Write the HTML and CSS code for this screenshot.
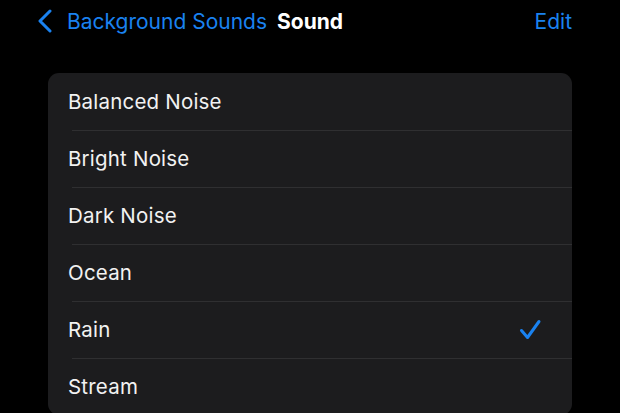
FILE: index.html
```html
<!DOCTYPE html>
<html lang="en">
<head>
  <meta charset="UTF-8" />
  <meta name="viewport" content="width=620, height=413, initial-scale=1.0" />
  <title>Sound</title>
  <link rel="stylesheet" href="styles.css">
</head>
<body>
  <nav class="navbar">
    <a class="back" href="#">
      <svg class="chevron" width="16" height="24" viewBox="0 0 16 24">
        <polyline points="13,2 3,12 13,22" />
      </svg>
      <span>Background Sounds</span>
    </a>
    <span class="title">Sound</span>
    <a class="edit" href="#">Edit</a>
  </nav>

  <ul class="list">
    <li>Balanced Noise</li>
    <li>Bright Noise</li>
    <li>Dark Noise</li>
    <li>Ocean</li>
    <li class="selected">Rain
      <svg class="check" width="24" height="24" viewBox="0 0 24 24">
        <polyline points="3.5,12.5 9.5,19.5 21,3.5" />
      </svg>
    </li>
    <li>Stream</li>
  </ul>
</body>
</html>
```

FILE: styles.css
```css
html, body {
  margin: 0;
  padding: 0;
  background: #000;
  color: #fff;
  font-family: Inter, 'Liberation Sans', sans-serif;
  overflow: hidden;
}

.navbar {
  display: flex;
  align-items: center;
  height: 42px;
  padding: 0 48px 0 37px;
}

.back {
  display: flex;
  align-items: center;
  color: #1a82f0;
  text-decoration: none;
  font-size: 21px;
}

.chevron {
  margin-right: 14px;
}

.chevron polyline,
.check polyline {
  fill: none;
  stroke: #1a82f0;
  stroke-width: 3;
  stroke-linecap: round;
  stroke-linejoin: round;
}

.title {
  margin-left: 10px;
  font-size: 21px;
  font-weight: 700;
}

.edit {
  margin-left: auto;
  color: #1a82f0;
  text-decoration: none;
  font-size: 21px;
}

.list {
  list-style: none;
  margin: 31px 48px 0 48px;
  padding: 0;
  background: #1c1c1e;
  border-radius: 11px;
}

.list li {
  position: relative;
  display: flex;
  align-items: center;
  height: 57px;
  padding: 0 30px 0 20px;
  font-size: 20.5px;
  letter-spacing: 0.2px;
  color: #f2f2f2;
}

.list li + li::before {
  content: '';
  position: absolute;
  top: 0;
  left: 24px;
  right: 0;
  height: 1px;
  background: #2f2f31;
}

.check {
  margin-left: auto;
}
```
